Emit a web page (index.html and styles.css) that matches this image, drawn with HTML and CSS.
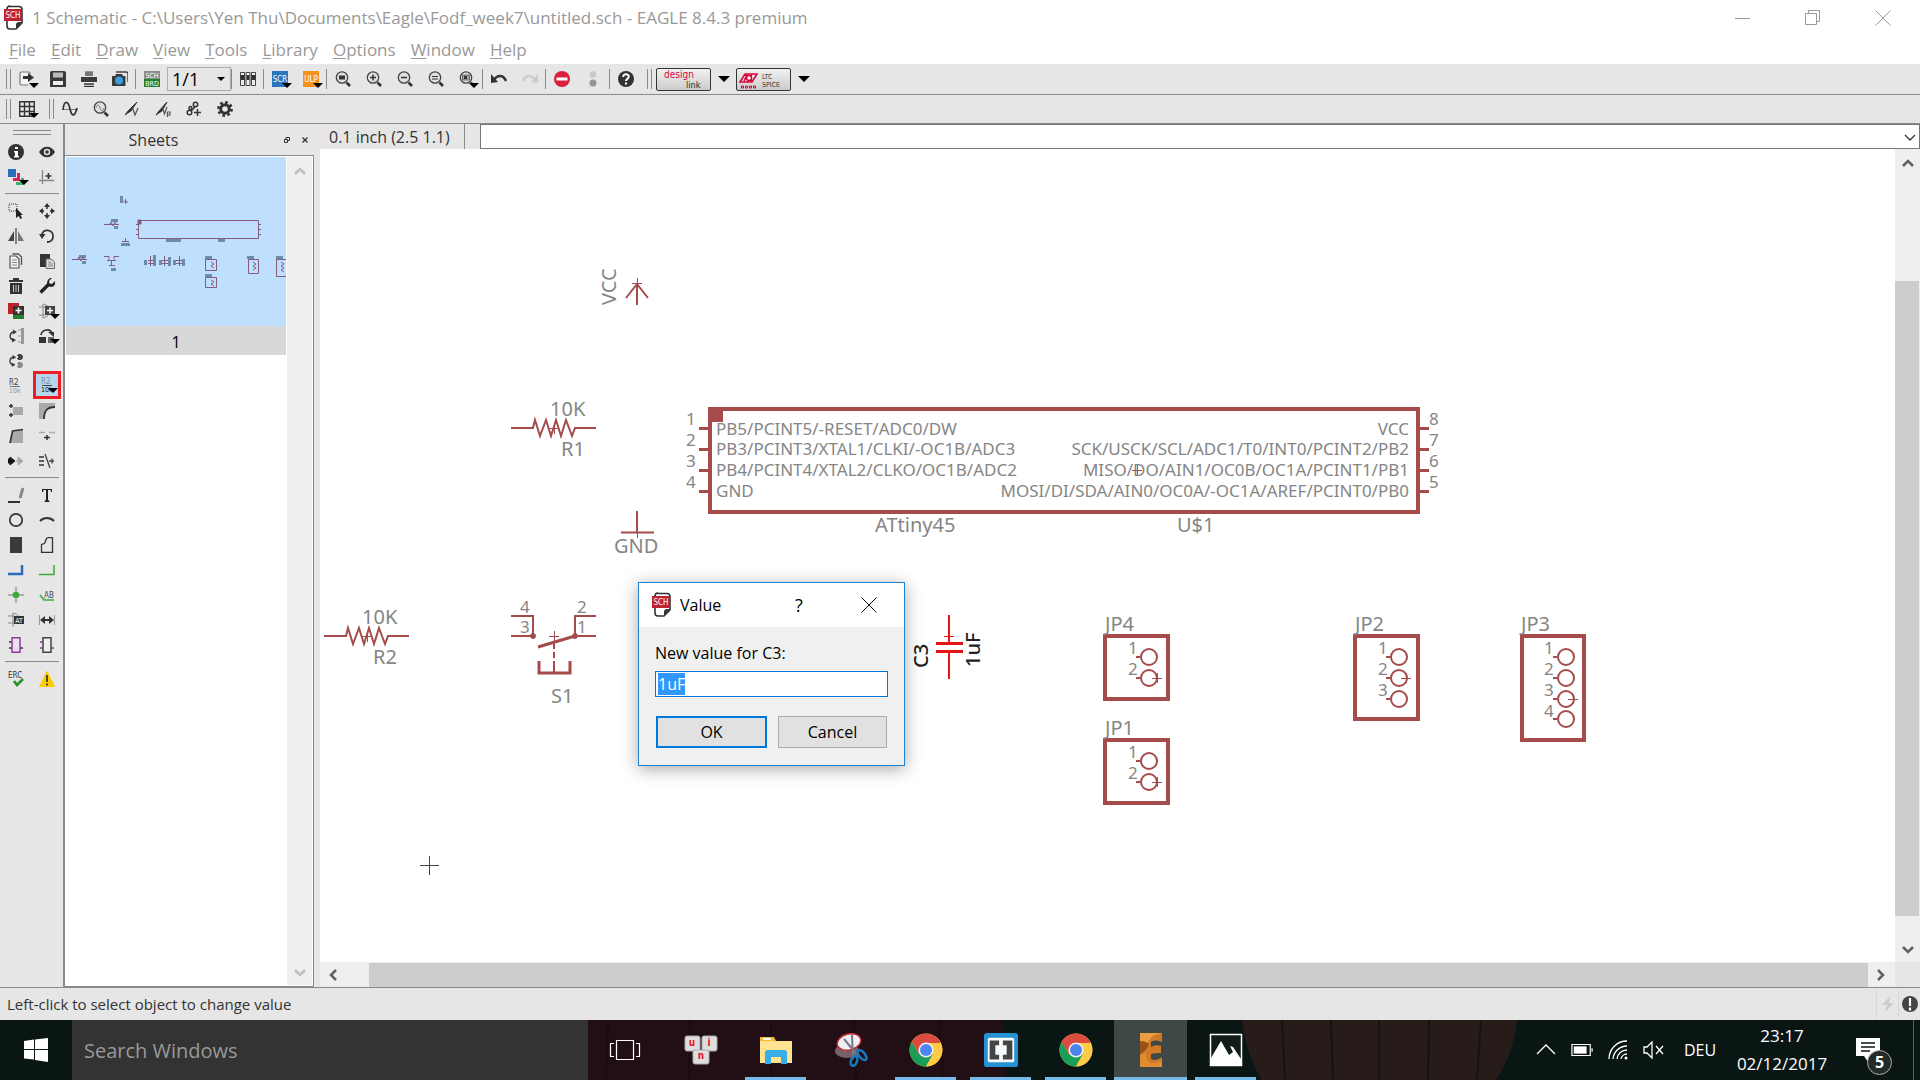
FILE: index.html
```html
<!DOCTYPE html>
<html lang="en">
<head>
<meta charset="utf-8">
<title>1 Schematic - EAGLE 8.4.3 premium</title>
<link rel="stylesheet" href="styles.css">
</head>
<body>
<svg class="defs" aria-hidden="true">
  <symbol id="sch-file" viewBox="0 0 20 26">
    <path d="M5 1.500h10a3 3 0 0 1 3 3V18l-6 6H6a3 3 0 0 1-3-3V4a3 3 0 0 1 3-3z" fill="#fff" stroke="#333" stroke-width="1.600"/>
    <path d="M18 17l-6 7v-4a3 3 0 0 1 3-3z" fill="#333"/>
    <rect x="0" y="4" width="18" height="12" fill="#bf2330"/>
    <text x="9" y="13" font-size="8" text-anchor="middle" class="tiny" fill="#fff">SCH</text>
  </symbol>
  <symbol id="lens" viewBox="0 0 16 16">
    <circle cx="7" cy="6.500" r="5.700" fill="#e0e0e0" stroke="#444" stroke-width="1.300"/>
    <path d="M11.500 11.500l3.500 3.500" stroke="#333" stroke-width="2.600"/>
  </symbol>
  <symbol id="chrome" viewBox="0 0 34 34">
    <circle cx="17" cy="17" r="16.500" fill="#fbc94a"/>
    <path d="M17 17L2.700 8.800A16.500 16.500 0 0 1 31.300 9H17z" fill="#db4b3f"/>
    <path d="M2.700 8.800A16.500 16.500 0 0 0 17 33.500l7-12.500-14 0z" fill="#1a9d57"/>
    <path d="M31.300 9H17l7 12-7 12.500A16.500 16.500 0 0 0 31.300 9z" fill="#fdcb45"/>
    <path d="M2.700 8.800L10 21l4-11h17.300A16.500 16.500 0 0 0 2.700 8.800z" fill="#db4b3f"/>
    <circle cx="17" cy="17" r="7.600" fill="#f1f1f1"/>
    <circle cx="17" cy="17" r="6" fill="#4a86ee"/>
  </symbol>
  <symbol id="rotate" viewBox="0 0 16 16">
    <path d="M8 3C1 3 1 13 7 13" fill="none" stroke="#3b3b3b" stroke-width="1.800"/>
    <path d="M6 0l5 3-5 3zM5 10l5 3-5 3z" fill="#3b3b3b"/>
  </symbol>
</svg>

<header class="titlebar">
  <svg class="app-icon" viewBox="0 0 20 26"><use href="#sch-file"/></svg>
  <h1>1 Schematic - C:\Users\Yen Thu\Documents\Eagle\Fodf_week7\untitled.sch - EAGLE 8.4.3 premium</h1>
  <div class="window-buttons">
    <button type="button" aria-label="Minimize"><svg viewBox="0 0 16 16"><path d="M0 8.500h15"/></svg></button>
    <button type="button" aria-label="Restore"><svg viewBox="0 0 16 16"><path d="M.5 3.500h11v11h-11zM3.500 3.500v-3h11v11h-3"/></svg></button>
    <button type="button" aria-label="Close"><svg viewBox="0 0 16 16"><path d="M.5 .5l15 15M15.500 .5l-15 15"/></svg></button>
  </div>
</header>

<nav class="menubar">
  <button type="button"><u>F</u>ile</button>
  <button type="button"><u>E</u>dit</button>
  <button type="button"><u>D</u>raw</button>
  <button type="button"><u>V</u>iew</button>
  <button type="button"><u>T</u>ools</button>
  <button type="button"><u>L</u>ibrary</button>
  <button type="button"><u>O</u>ptions</button>
  <button type="button"><u>W</u>indow</button>
  <button type="button"><u>H</u>elp</button>
</nav>

<div class="toolbar">
  <span class="grip"></span>
  <button type="button" class="tool drop" aria-label="Open"><svg viewBox="0 0 16 16"><path d="M11 3V2.500A1.500 1.500 0 0 0 9.500 1h-7A1.500 1.500 0 0 0 1 2.500v10A1.500 1.500 0 0 0 2.500 14h7" fill="#f4f4f4" stroke="#777" stroke-width="1.200"/><path d="M4 5h5V2l6 4.500L9 11V8H4z" fill="#333"/></svg></button>
  <button type="button" class="tool" aria-label="Save"><svg viewBox="0 0 16 16"><path d="M0 2a2 2 0 0 1 2-2h12a2 2 0 0 1 2 2v14H0z" fill="#3a3a3a"/><path d="M3 1.500h10v5H3z" fill="#bbb"/><path d="M3 10h10v4H3z" fill="#eee"/></svg></button>
  <button type="button" class="tool" aria-label="Print"><svg viewBox="0 0 16 16"><path d="M4 0h8v5H4z" fill="#999"/><path d="M4 2h8M4 4h8" stroke="#555"/><path d="M0 6h16v5H0z" fill="#3a3a3a"/><path d="M3 11h10v5H3z" fill="#f2f2f2"/><path d="M3 13h10M3 15.500h10" stroke="#333" stroke-width="1.500"/></svg></button>
  <button type="button" class="tool" aria-label="CAM processor"><svg viewBox="0 0 16 16"><path d="M4 1h10a2 2 0 0 1 2 2v8" fill="none" stroke="#444" stroke-width="1.500"/><path d="M0 5h3l1-2h6l1 2h2.500v10H0z" fill="#3a3a3a"/><circle cx="7" cy="9.500" r="4" fill="#36a0e0"/></svg></button>
  <button type="button" class="tool split" aria-label="Switch to board"><svg viewBox="0 0 16 16"><path d="M0 0h16v8H0z" fill="#8b8b8b"/><path d="M0 8h16v8H0z" fill="#25802b"/><text x="8" y="7" font-size="7" class="tiny" text-anchor="middle" fill="#fff">SCH</text><text x="8" y="15" font-size="7" class="tiny" text-anchor="middle" fill="#fff">BRD</text></svg></button>
  <label class="sheet-select"><select aria-label="Sheet"><option>1/1</option></select></label>
  <button type="button" class="tool split" aria-label="Library"><svg viewBox="0 0 16 16"><g fill="#eee" stroke="#444"><path d="M.5 1.500h4v13h-4zM6 1.500h4v13H6zM11.500 1.500h4v13h-4z"/></g><path d="M1 4h3v5H1zM6.500 4h3v5h-3zM12 4h3v5h-3z" fill="#333"/></svg></button>
  <button type="button" class="tool split drop" aria-label="Script"><svg viewBox="0 0 16 16"><path d="M0 0h16v16H0z" fill="#2a75bd"/><text x="8" y="11" font-size="8" class="tiny" text-anchor="middle" fill="#fff">SCR</text></svg></button>
  <button type="button" class="tool drop" aria-label="ULP"><svg viewBox="0 0 16 16"><path d="M0 0h16v16H0z" fill="#f5941d"/><text x="8" y="11" font-size="8" class="tiny" text-anchor="middle" fill="#fff">ULP</text></svg></button>
  <button type="button" class="tool split" aria-label="Zoom to fit"><svg viewBox="0 0 16 16"><use href="#lens"/><path d="M4 4.500h6v4H4z" fill="#333"/></svg></button>
  <button type="button" class="tool" aria-label="Zoom in"><svg viewBox="0 0 16 16"><use href="#lens"/><path d="M4 6.500h6M7 3.500v6" stroke="#333" stroke-width="1.500"/></svg></button>
  <button type="button" class="tool" aria-label="Zoom out"><svg viewBox="0 0 16 16"><use href="#lens"/><path d="M4 6.500h6" stroke="#333" stroke-width="1.500"/></svg></button>
  <button type="button" class="tool" aria-label="Redraw"><svg viewBox="0 0 16 16"><use href="#lens"/><path d="M4 5.500h6M4 8h6" stroke="#333"/></svg></button>
  <button type="button" class="tool drop" aria-label="Zoom select"><svg viewBox="0 0 16 16"><use href="#lens"/><path d="M3.500 4h7v5h-7z" fill="#aaa" stroke="#666"/><path d="M5 5h3v3H5z" fill="#333"/></svg></button>
  <button type="button" class="tool split" aria-label="Undo"><svg viewBox="0 0 16 16"><path d="M3 9c3-5 9-6 12 1" fill="none" stroke="#333" stroke-width="2.400"/><path d="M0 3v9l7-1z" fill="#333"/></svg></button>
  <button type="button" class="tool" aria-label="Redo" disabled><svg viewBox="0 0 16 16"><path d="M13 9C10 4 4 3 1 10" fill="none" stroke="#ccc" stroke-width="2.400"/><path d="M16 3v9l-7-1z" fill="#ccc"/></svg></button>
  <button type="button" class="tool split" aria-label="Stop"><svg viewBox="0 0 16 16"><circle cx="8" cy="8" r="8" fill="#dc1f3c"/><path d="M2.500 8h11" stroke="#fff" stroke-width="3"/></svg></button>
  <button type="button" class="tool" aria-label="Go" disabled><svg viewBox="0 0 16 16"><circle cx="8" cy="3.500" r="3.200" fill="#c8c8c8"/><circle cx="8" cy="12" r="3.500" fill="#959595"/></svg></button>
  <button type="button" class="tool split help" aria-label="Help"><svg viewBox="0 0 16 16"><circle cx="8" cy="8" r="8" fill="#333"/><path d="M5.200 6c0-4 6-3.500 5.500 0C10.500 8 8 7.800 8 10" fill="none" stroke="#fff" stroke-width="2"/><path d="M7 11.500h2v2H7z" fill="#fff"/></svg></button>
  <span class="grip"></span>
  <button type="button" class="vendor" aria-label="Design Link"><svg viewBox="0 0 53 21"><text x="7" y="9" font-size="10" fill="#d6083b" class="tiny">design</text><text x="29" y="19" font-size="9" fill="#222" class="tiny">link</text></svg></button>
  <button type="button" class="arrow" aria-label="Design Link options"></button>
  <button type="button" class="vendor" aria-label="LTC Spice"><svg viewBox="0 0 53 21"><path d="M3 13L8 5h12l-5 8zM10 6l-3 6M7 5l9 8M15 5l-4 8" fill="none" stroke="#d6083b" stroke-width="1.600"/><circle cx="12" cy="9" r="2.500" fill="#fff" stroke="#d6083b" stroke-width="1.500"/><path d="M4.500 17h2v2h-2zM8.500 17h2v2h-2zM12.500 17h2v2h-2zM16.500 17h2v2h-2z" fill="none" stroke="#d6083b"/><text x="25" y="10" font-size="7" fill="#333" class="tiny">LTC</text><text x="25" y="18" font-size="7" fill="#333" class="tiny">SPICE</text></svg></button>
  <button type="button" class="arrow" aria-label="LTC Spice options"></button>
</div>

<div class="toolbar second">
  <span class="grip"></span>
  <button type="button" class="tool drop" aria-label="Grid"><svg viewBox="0 0 16 16"><path d="M.75 .75h14.500v14.500H.75zM5.500 0v16M10.500 0v16M0 5.500h16M0 10.500h16" fill="none" stroke="#333" stroke-width="1.400"/></svg></button>
  <span class="grip"></span>
  <button type="button" class="tool" aria-label="Simulate"><svg viewBox="0 0 16 16"><path d="M0 8.500h16" stroke="#777"/><path d="M1 9C2-1 6-1 8 8s5 7 7-1" fill="none" stroke="#333" stroke-width="1.700"/></svg></button>
  <button type="button" class="tool" aria-label="Probe view"><svg viewBox="0 0 16 16"><use href="#lens"/><path d="M3 7c1-4 3-4 4 0s3 3 4 0" fill="none" stroke="#777"/></svg></button>
  <button type="button" class="tool" aria-label="Voltage probe"><svg viewBox="0 0 16 16"><path d="M1 14l3-4 9-9-6 9-4 2.500z" fill="#333" stroke="#333"/><path d="M8.500 7l2.500 7 3-7" fill="none" stroke="#555" stroke-width="1.300"/></svg></button>
  <button type="button" class="tool" aria-label="Phase probe"><svg viewBox="0 0 16 16"><path d="M1 14l3-4 8-9-5 9-4 2.500z" fill="#333" stroke="#333"/><path d="M7.500 6l2 7 2.500-7M12.500 16v-5h2.500v3h-2.500" fill="none" stroke="#555" stroke-width="1.200"/></svg></button>
  <button type="button" class="tool" aria-label="Add model"><svg viewBox="0 0 16 16"><g fill="none" stroke="#333" stroke-width="1.500"><circle cx="3.500" cy="11.500" r="2.300"/><circle cx="9.500" cy="3.500" r="2.200"/><circle cx="4.500" cy="7" r="1.500"/><path d="M5 10l4-4M11.500 8v7M8 11.500h7"/></g></svg></button>
  <button type="button" class="tool" aria-label="Settings"><svg viewBox="0 0 16 16"><circle cx="8" cy="8" r="4.300" fill="none" stroke="#333" stroke-width="3"/><circle cx="8" cy="8" r="6.600" fill="none" stroke="#333" stroke-width="2.600" stroke-dasharray="2.600 2.580"/></svg></button>
</div>

<main class="workspace">
  <aside class="palette" aria-label="Drawing tools">
    <span class="palette-grip"></span>
    <div class="palette-group">
      <button type="button" aria-label="Info"><svg viewBox="0 0 16 16"><circle cx="8" cy="8" r="8" fill="#333"/><path d="M7 3h3v2H7zM6 7h4v5h1v1.500H6V12h1V8.500H6z" fill="#fff"/></svg></button>
      <button type="button" aria-label="Show"><svg viewBox="0 0 16 16"><path d="M0 8c4-7 12-7 16 0-4 7-12 7-16 0z" fill="#333"/><circle cx="8" cy="8" r="2.500" fill="#333" stroke="#ddd" stroke-width="1.500"/></svg></button>
      <button type="button" class="drop" aria-label="Layers"><svg viewBox="0 0 16 16"><path d="M0 0h8v8H0z" fill="#2a6ebb"/><path d="M9 4h3v8H5V9h4z" fill="#dd1f55"/><path d="M13 9h3v7H8v-3h5z" fill="#39b36c"/></svg></button>
      <button type="button" aria-label="Mark"><svg viewBox="0 0 16 16"><path d="M3.500 1v14M0 11.500h15" stroke="#888" stroke-width="1.300"/><path d="M6.500 7h6M9.500 4v6" stroke="#333" stroke-width="1.600"/></svg></button>
    </div>
    <div class="palette-group">
      <button type="button" aria-label="Group"><svg viewBox="0 0 16 16"><path d="M1 1h8v7H1z" fill="none" stroke="#333" stroke-dasharray="1 1"/><path d="M8 5v10l2.500-2 2 3 1.500-1-1.500-3H15z" fill="#222"/></svg></button>
      <button type="button" aria-label="Move"><svg viewBox="0 0 16 16"><path d="M8 0l3 4H5zM8 16l3-4H5zM0 8l4-3v6zM16 8l-4-3v6z" fill="#333"/><path d="M8 3v3M8 10v3M3 8h2M11 8h2" stroke="#333" stroke-width="1.500"/></svg></button>
      <button type="button" aria-label="Mirror"><svg viewBox="0 0 16 16"><path d="M6 3v10H0z" fill="#444"/><path d="M10 3v10h6z" fill="#777"/><path d="M8 0v16" stroke="#555" stroke-width="1.400"/></svg></button>
      <button type="button" aria-label="Rotate"><svg viewBox="0 0 16 16"><path d="M3 7c0-7 12-6 11 2-.5 4-4 5-6 5" fill="none" stroke="#333" stroke-width="1.800"/><path d="M0 6h6.500L3 11z" fill="#333"/></svg></button>
      <button type="button" aria-label="Copy"><svg viewBox="0 0 16 16"><path d="M4.500 1h6l3 3v8" fill="none" stroke="#555" stroke-width="1.300"/><path d="M2 3h6l3 3v9H2z" fill="#f3f3f3" stroke="#555" stroke-width="1.200"/><path d="M4 7h5M4 9.500h5M4 12h5" stroke="#888"/></svg></button>
      <button type="button" aria-label="Paste"><svg viewBox="0 0 16 16"><path d="M1 1h10v13H1z" fill="#333"/><path d="M7 6h5l3.500 3v6.500H7z" fill="#ddd" stroke="#666"/><path d="M9 9h3M9 11h5M9 13h5" stroke="#888"/></svg></button>
      <button type="button" aria-label="Delete"><svg viewBox="0 0 16 16"><path d="M1 2h14v2H1zM5 0h6v2H5zM2 5h12v11H2z" fill="#333"/><path d="M5.500 7v7M8 7v7M10.500 7v7" stroke="#ccc"/></svg></button>
      <button type="button" aria-label="Change"><svg viewBox="0 0 16 16"><path d="M1.500 14.500L10 6" stroke="#222" stroke-width="3.400"/><path d="M13 0L10 3l.5 2.500 2.500.5 3-3c1 4-2 7-6 5.500C6.500 7 8-.5 13 0z" fill="#222"/></svg></button>
      <button type="button" aria-label="Add"><svg viewBox="0 0 16 16"><path d="M0 0h11v11H0z" fill="#bb2129"/><path d="M5 12h11v4H5z" fill="#25802b"/><path d="M5 3h11v9H5z" fill="#333"/><path d="M10.500 4.500v6M7.500 7.500h6" stroke="#fff" stroke-width="1.700"/></svg></button>
      <button type="button" class="drop" aria-label="Replace"><svg viewBox="0 0 16 16"><path d="M0 4h6M0 12h6M4 1v14C13 13 13 3 4 1z" fill="none" stroke="#888"/><path d="M6 3h10v9H6z" fill="#444"/><path d="M11 4.500v6M8 7.500h6" stroke="#fff" stroke-width="1.500"/></svg></button>
      <button type="button" aria-label="Pin swap"><svg viewBox="0 0 16 16"><use href="#rotate" width="13" height="16"/><path d="M13 0h3v16h-3z" fill="#999"/><path d="M10 2h4M10 8h4M10 14h4" stroke="#999"/></svg></button>
      <button type="button" class="drop" aria-label="Replace package"><svg viewBox="0 0 16 16"><path d="M2 7c1-6 10-7 11-1" fill="none" stroke="#333" stroke-width="1.700"/><path d="M9 4h6v5zM0 9h7v6H0z" fill="#333"/><path d="M9 9h6v6H9z" fill="#666"/></svg></button>
      <button type="button" aria-label="Gate swap"><svg viewBox="0 0 16 16"><use href="#rotate" width="12" height="16"/><path d="M10 1h2c4 0 4 6 0 6h-2zM9 2h2v1H9zM9 5h2v1H9z" fill="#444"/><path d="M10 9h2c4 0 4 6 0 6h-2zM9 10h2v1H9zM9 13h2v1H9z" fill="#888"/></svg></button>
      <span></span>
      <button type="button" aria-label="Name"><svg viewBox="0 0 16 16"><text x="1" y="7" font-size="8" class="tiny" fill="#444">R2</text><path d="M2 8.500h10" stroke="#777"/><text x="1" y="15" font-size="7" class="tiny" fill="#999">10k</text></svg></button>
      <button type="button" class="drop active" aria-label="Value"><svg viewBox="0 0 16 16"><text x="2" y="7" font-size="8" class="tiny" fill="#7b8f9d">R2</text><path d="M3 8.500h10" stroke="#444"/><text x="2" y="15" font-size="7" class="tiny" fill="#111">10k</text></svg></button>
      <button type="button" aria-label="Smash"><svg viewBox="0 0 16 16"><path d="M1 3h4M3 1v4M1 12h4M3 10v4" stroke="#333" stroke-width="1.500"/><path d="M5 4h10v8H5z" fill="#aaa"/></svg></button>
      <button type="button" aria-label="Miter"><svg viewBox="0 0 16 16"><path d="M0 0h16v4C8 4 5 8 5 16H0z" fill="#aaa"/><path d="M5 16C5 8 8 4 16 4" fill="none" stroke="#333" stroke-width="1.800"/></svg></button>
      <button type="button" aria-label="Split"><svg viewBox="0 0 16 16"><path d="M2 15L5 3l10-1v13z" fill="#aaa"/><path d="M2 15L4.500 3 15 1.500" fill="none" stroke="#333" stroke-width="1.700"/></svg></button>
      <button type="button" aria-label="Optimize"><svg viewBox="0 0 16 16"><path d="M0 4.500h6M10 4.500h6" stroke="#aaa" stroke-width="1.300"/><path d="M5 9.500h6M8 7v5" stroke="#333" stroke-width="1.500"/></svg></button>
      <button type="button" aria-label="Invoke"><svg viewBox="0 0 16 16"><path d="M0 6h2V4l5 4-5 4v-2H0z" fill="#111" stroke="#111"/><path d="M8 8h2V4l5 4-5 4V8" fill="#aaa" stroke="#aaa"/></svg></button>
      <button type="button" aria-label="Cut line"><svg viewBox="0 0 16 16"><path d="M0 4h5M0 8h5M0 12h5" stroke="#333" stroke-width="1.500"/><path d="M6 1l5 14M10 8h5M13 5.500v5" fill="none" stroke="#444" stroke-width="1.300"/></svg></button>
    </div>
    <div class="palette-group">
      <button type="button" aria-label="Line"><svg viewBox="0 0 16 16"><path d="M0 15h12" stroke="#111" stroke-width="1.700"/><path d="M15 1l-3 10" stroke="#888" stroke-width="3"/></svg></button>
      <button type="button" aria-label="Text"><svg viewBox="0 0 16 16"><path d="M3 2h10v3h-1l-.5-2H9v10l1.500 1v1h-5v-1L7 13V3H4.500L4 5H3z" fill="#222"/></svg></button>
      <button type="button" aria-label="Circle"><svg viewBox="0 0 16 16"><circle cx="8" cy="8" r="6.200" fill="none" stroke="#333" stroke-width="1.700"/></svg></button>
      <button type="button" aria-label="Arc"><svg viewBox="0 0 16 16"><path d="M1 9c4-4 10-4 14 0" fill="none" stroke="#333" stroke-width="2"/></svg></button>
      <button type="button" aria-label="Rectangle"><svg viewBox="0 0 16 16"><path d="M2 0h12v16H2z" fill="#3a3a3a"/></svg></button>
      <button type="button" aria-label="Polygon"><svg viewBox="0 0 16 16"><path d="M2.500 15.500v-8l3-1 2-5 2-1h4v15z" fill="none" stroke="#333" stroke-width="1.300"/></svg></button>
      <button type="button" aria-label="Bus"><svg viewBox="0 0 16 16"><path d="M0 12h14V3" fill="none" stroke="#2a6ebb" stroke-width="2.500"/></svg></button>
      <button type="button" aria-label="Net"><svg viewBox="0 0 16 16"><path d="M0 12.500h15V3" fill="none" stroke="#3cab3c" stroke-width="1.500"/></svg></button>
      <button type="button" aria-label="Junction"><svg viewBox="0 0 16 16"><path d="M0 8h16M8 0v16" stroke="#777"/><circle cx="8" cy="8" r="3.300" fill="#3cab3c"/></svg></button>
      <button type="button" aria-label="Label"><svg viewBox="0 0 16 16"><path d="M1 8l4 5h10" fill="none" stroke="#3cab3c" stroke-width="1.700"/><text x="5" y="11" font-size="8" class="tiny" fill="#444">AB</text></svg></button>
      <button type="button" aria-label="Attribute"><svg viewBox="0 0 16 16"><path d="M0 4h6M0 11h6M5 1v14M5 1c5 1 8 5 8 7" fill="none" stroke="#888"/><path d="M6 4h10v8H6z" fill="#333"/><text x="11" y="11" font-size="7" class="tiny" text-anchor="middle" fill="#fff">AT</text></svg></button>
      <button type="button" aria-label="Dimension"><svg viewBox="0 0 16 16"><path d="M.5 3v10M15.500 3v10" stroke="#999"/><path d="M4 8h8" stroke="#333" stroke-width="2"/><path d="M1 8l5-4v8zM15 8l-5-4v8z" fill="#333"/></svg></button>
      <button type="button" aria-label="Module"><svg viewBox="0 0 16 16"><path d="M1 5h3M1 11h3M12 11h3" stroke="#333" stroke-width="1.700"/><path d="M4 .7h8v14.600H4z" fill="#e8e0ec" stroke="#8b3f9b" stroke-width="1.500"/></svg></button>
      <button type="button" aria-label="Port"><svg viewBox="0 0 16 16"><path d="M1 5h3M1 11h3M12 11h3" stroke="#8b3f9b" stroke-width="1.700"/><path d="M4 .7h8v14.600H4z" fill="#eee" stroke="#444" stroke-width="1.500"/></svg></button>
    </div>
    <div class="palette-group">
      <button type="button" aria-label="ERC"><svg viewBox="0 0 16 16"><text x="0" y="7" font-size="8" class="tiny" fill="#333">ERC</text><path d="M6 10l3 4 6-6" fill="none" stroke="#2c8e35" stroke-width="2.700"/></svg></button>
      <button type="button" aria-label="Errors"><svg viewBox="0 0 16 16"><path d="M8 .5L15.500 15.500H.5z" fill="#fc0" stroke="#fc0"/><path d="M8 4v7M8 12.500v2" stroke="#333" stroke-width="1.700"/></svg></button>
    </div>
  </aside>

  <section class="sheets">
    <header>
      <h2>Sheets</h2>
      <button type="button" aria-label="Float"><svg viewBox="0 0 6 6"><path d="M.5 2.500h3v3h-3zM2 2V.5h3.500v3H4" fill="none" stroke="#333"/></svg></button>
      <button type="button" aria-label="Close"><svg viewBox="0 0 6 6"><path d="M.5 .5l5 5M5.500 .5l-5 5" stroke="#333" stroke-width="1.300"/></svg></button>
    </header>
    <div class="sheet-body">
      <div class="sheet-list">
        <figure>
          <svg viewBox="66 157 220 169">
            <g fill="#6b8cab"><path d="M120 196h3v7h-3zM111 219h7v3h-7zM114 226h4v3h-4zM121 243h9v3h-9zM166 239h15v3h-15zM218 239h7v3h-7zM79 255h7v3h-7zM82 261h4v3h-4zM111 268h5v3h-5zM144 260h3v5h-3zM153 255h3v11h-3zM159 260h3v5h-3zM168 257h3v9h-3zM173 260h3v5h-3zM182 259h3v7h-3zM205 256h7v3h-7zM205 274h7v3h-7zM247 256h7v3h-7zM276 256h7v3h-7z"/></g>
            <g fill="none" stroke="#865c7c"><path d="M138.500 220.500h120v18h-120zM104 224.500h15M109 225l2-3 2 4 2-4 2 3M125.500 199v5M123 202.500l2-2 3 2M125.500 238v4M122 241.500h7M72 259.500h15M77 260l2-3 2 4 2-4 2 3M104 256.500h5v3M119 256.500h-5v3M107 260.500h9M111.500 261v4M109 265.500h6M136 224.500h2M136 229.500h2M136 234.500h2M259 224.500h2M259 229.500h2M259 234.500h2M150.500 256v10M148 260.500h6M148 263.500h6M164.500 256v10M162 260.500h6M162 263.500h6M179.500 256v10M176 260.500h6M176 263.500h6M205.500 259.500h11v11h-11zM205.500 277.500h11v10h-11zM248.500 259.500h10v14h-10zM276.500 259.500h11v17h-11zM211 262l3 2-3 2 3 2M211 280l3 2-3 2 3 2M253 262l3 2-3 2 3 2-3 2M281 262l3 2-3 2 3 2-3 2 3 2"/><path d="M138 220h3v4h-3z" fill="#865c7c"/></g>
          </svg>
          <figcaption>1</figcaption>
        </figure>
      </div>
      <div class="vscroll faint">
        <svg viewBox="0 0 12 8"><path d="M1 7l5-5 5 5"/></svg>
        <svg viewBox="0 0 12 8"><path d="M1 1l5 5 5-5"/></svg>
      </div>
    </div>
  </section>

  <section class="editor">
    <div class="command-row">
      <output>0.1 inch (2.5 1.1)</output>
      <div class="command">
        <select aria-label="Command line"><option></option></select>
        <svg viewBox="0 0 12 8"><path d="M1 1l5 5 5-5" fill="none" stroke="#333" stroke-width="1.300"/></svg>
      </div>
    </div>
    <div class="canvas">
      <svg class="schematic" role="img" aria-label="Schematic">
        <defs>
          <g id="resistor"><path d="M511 428h22l2-8 5 16 6-16 5 16 5-16 5 16 5-16 6 16 3-8h21" stroke-width="2"/><path d="M549 428.500h10M554.500 424v10"/></g>
          <g id="pad"><circle r="8" stroke-width="2"/><path d="M-13 0h4" stroke-width="2"/></g>
          <path id="origin" d="M-5 .5h10M.5-5v10"/>
        </defs>
        <g transform="translate(-320 -149)">
          <g class="part">
            <path d="M637 283v22M626 298l11-14 11 14" stroke-width="2"/><use href="#origin" x="637" y="283"/>
            <use href="#resistor"/><use href="#resistor" x="-187" y="208"/>
            <path d="M637 511v22M621 532.500h33" stroke-width="2"/><path d="M637.500 530v8"/>
            <path d="M710 409h708v103H710z" stroke-width="4"/><path d="M708 407h15v15h-15z" fill="#a54b4b" stroke="none"/>
            <path d="M699 428.500h9M699 449.500h9M699 470.500h9M699 491.500h9M1420 428.500h9M1420 449.500h9M1420 470.500h9M1420 491.500h9" stroke-width="3"/>
            <path d="M511 616h22v20h-22M596 616h-21v20h21" stroke-width="2"/>
            <circle cx="533" cy="636" r="2.500" fill="#a54b4b"/><circle cx="575" cy="636" r="2.500" fill="#a54b4b"/>
            <path d="M575 636l-37 11M539 661v12h31v-12" stroke-width="3"/><path d="M554 643v6M554 652v6M554 661v12" stroke-width="2"/><use href="#origin" x="554" y="636"/>
            <g stroke-width="4"><path d="M1105 636h63v63h-63zM1105 740h63v63h-63zM1355 636h63v83h-63zM1522 636h62v104h-62z"/></g>
            <use href="#pad" x="1149" y="657"/><use href="#pad" x="1149" y="678"/><use href="#origin" x="1157" y="678"/>
            <use href="#pad" x="1149" y="761"/><use href="#pad" x="1149" y="782"/><use href="#origin" x="1157" y="782"/>
            <use href="#pad" x="1399" y="657"/><use href="#pad" x="1399" y="678"/><use href="#pad" x="1399" y="699"/><use href="#origin" x="1406" y="678"/>
            <use href="#pad" x="1566" y="657"/><use href="#pad" x="1566" y="678"/><use href="#pad" x="1566" y="699"/><use href="#pad" x="1566" y="719"/><use href="#origin" x="1573" y="699"/>
          </g>
          <g class="part selected"><path d="M949 615v28M949 652v27" stroke-width="2"/><path d="M936 643.500h27M936 651.500h27" stroke-width="3"/><use href="#origin" x="949" y="636"/></g>
          <g class="name">
            <text transform="translate(616 305) rotate(-90)">VCC</text>
            <text x="550" y="416">10K</text><text x="561" y="456">R1</text>
            <text x="362" y="624">10K</text><text x="373" y="664">R2</text>
            <text x="614" y="553">GND</text><text x="875" y="532">ATtiny45</text><text x="1177" y="532">U$1</text>
            <text x="551" y="703">S1</text>
            <text x="1105" y="631">JP4</text><text x="1105" y="735">JP1</text><text x="1355" y="631">JP2</text><text x="1521" y="631">JP3</text>
            <text class="picked" transform="translate(928 668) rotate(-90)">C3</text><text class="picked" transform="translate(980 667) rotate(-90)">1uF</text>
          </g>
          <g class="pin">
            <text x="686" y="425">1</text><text x="686" y="446">2</text><text x="686" y="467">3</text><text x="686" y="488">4</text>
            <text x="1429" y="425">8</text><text x="1429" y="446">7</text><text x="1429" y="467">6</text><text x="1429" y="488">5</text>
            <text x="520" y="613">4</text><text x="520" y="633">3</text><text x="577" y="613">2</text><text x="577" y="633">1</text>
            <text x="1128" y="654">1</text><text x="1128" y="675">2</text><text x="1128" y="758">1</text><text x="1128" y="779">2</text>
            <text x="1378" y="654">1</text><text x="1378" y="675">2</text><text x="1378" y="696">3</text>
            <text x="1544" y="654">1</text><text x="1544" y="675">2</text><text x="1544" y="696">3</text><text x="1544" y="717">4</text>
          </g>
          <g class="signal">
            <text x="716" y="435">PB5/PCINT5/-RESET/ADC0/DW</text><text x="716" y="455">PB3/PCINT3/XTAL1/CLKI/-OC1B/ADC3</text><text x="716" y="476">PB4/PCINT4/XTAL2/CLKO/OC1B/ADC2</text><text x="716" y="497">GND</text>
            <g text-anchor="end"><text x="1409" y="435">VCC</text><text x="1409" y="455">SCK/USCK/SCL/ADC1/T0/INT0/PCINT2/PB2</text><text x="1409" y="476">MISO/DO/AIN1/OC0B/OC1A/PCINT1/PB1</text><text x="1409" y="497">MOSI/DI/SDA/AIN0/OC0A/-OC1A/AREF/PCINT0/PB0</text></g>
          </g>
          <g class="part"><use href="#origin" x="1137" y="470"/></g>
          <path d="M420 865.500h19M429.500 856v19" stroke="#444"/>
        </g>
      </svg>

      <form class="dialog" role="dialog" aria-labelledby="dialog-title">
        <header>
          <svg class="app-icon" viewBox="0 0 20 26"><use href="#sch-file"/></svg>
          <h2 id="dialog-title">Value</h2>
          <button type="button" aria-label="Help">?</button>
          <button type="button" aria-label="Close"><svg viewBox="0 0 16 16"><path d="M.5 .5l15 15M15.500 .5l-15 15" stroke="#111"/></svg></button>
        </header>
        <div class="dialog-body">
          <label for="value">New value for C3:</label>
          <input id="value" type="text" value="1uF" spellcheck="false">
          <div class="dialog-actions">
            <button type="button" class="default">OK</button>
            <button type="button">Cancel</button>
          </div>
        </div>
      </form>
    </div>
    <div class="vscroll">
      <svg viewBox="0 0 12 8"><path d="M1 7l5-5 5 5"/></svg>
      <div class="track"><div class="thumb"></div></div>
      <svg viewBox="0 0 12 8"><path d="M1 1l5 5 5-5"/></svg>
    </div>
    <div class="hscroll">
      <svg viewBox="0 0 8 12"><path d="M7 1L2 6l5 5"/></svg>
      <div class="track"><div class="thumb"></div></div>
      <svg viewBox="0 0 8 12"><path d="M1 1l5 5-5 5"/></svg>
    </div>
  </section>
</main>

<footer class="status">
  <p>Left-click to select object to change value</p>
  <span class="status-cell"><svg viewBox="0 0 16 16"><path d="M10 0L2 9h5l-2 7 9-9H9z" fill="#ccc"/></svg></span>
  <span class="status-cell"><svg viewBox="0 0 16 16"><circle cx="8" cy="8" r="8" fill="#444"/><path d="M8 2v8M8 11.500v3" stroke="#fff" stroke-width="2.200"/></svg></span>
</footer>

<div class="taskbar">
  <svg class="wallpaper" aria-hidden="true">
    <path d="M588 0h415l3 60H588z" fill="#220f16"/>
    <path d="M608 0l-2 60M690 0l-1 60M771 0v60M854 0l2 60M939 0l4 60" stroke="#170c10" stroke-width="2"/>
    <path d="M1242 0q4 35 20 60h234q17-25 21-60z" fill="#271c1a"/>
    <path d="M1282 0l3 60M1331 0l2 60M1379 0v60M1429 0l-1 60M1481 0l-4 60" stroke="#171313" stroke-width="2"/>
    <path d="M1913.500 0v60" stroke="#5a6261"/>
  </svg>
  <button type="button" class="start" aria-label="Start"><svg viewBox="0 0 24 24"><path d="M0 3l10-1.500V11H0zM11 1.400L24 0v11H11zM0 12h10v9.500L0 20.500zM11 12h13v12l-13-2z" fill="#fff"/></svg></button>
  <input class="search" type="search" placeholder="Search Windows" aria-label="Search Windows">
  <div class="apps">
    <button type="button" aria-label="Task view"><svg viewBox="0 0 34 34"><path d="M7.500 7.500h17v19h-17zM5 10.500H1.500v13H5M27 10.500h3.500v13H27" fill="none" stroke="#fff" stroke-width="1.200"/></svg></button>
    <button type="button" aria-label="Unikey"><svg viewBox="0 0 34 34"><g fill="#dedede" stroke="#aaa"><rect x="1" y="3" width="15" height="15" rx="2"/><rect x="18" y="3" width="15" height="15" rx="2"/><rect x="9" y="17" width="16" height="14" rx="2"/></g><g fill="#e12" font-size="10" class="tiny bold" text-anchor="middle"><text x="8" y="13">u</text><text x="25" y="13">i</text><text x="17" y="26">n</text></g></svg></button>
    <button type="button" class="running" aria-label="File Explorer"><svg viewBox="0 0 34 34"><path d="M1 4h14l2 4h-16z" fill="#f5b82e"/><path d="M4 5h8v2H4z" fill="#fff"/><path d="M1 8h32v22H1z" fill="#ffe391"/><path d="M6 31V20a3 3 0 0 1 3-3h16a3 3 0 0 1 3 3v11h-6v-7H12v7z" fill="#37afe5"/></svg></button>
    <button type="button" aria-label="Snipping Tool"><svg viewBox="0 0 34 34"><ellipse cx="13" cy="18" rx="12" ry="7" fill="#75606a"/><ellipse cx="15" cy="9" rx="12" ry="8" fill="#eef0f7" stroke="#c42a31" stroke-width="1.500" transform="rotate(-15 15 9)"/><path d="M10 6l15 18M18 2l1 24" stroke="#778" stroke-width="2"/><g fill="none" stroke="#1878bb" stroke-width="2.500"><ellipse cx="20" cy="28" rx="3" ry="5" transform="rotate(20 20 28)"/><ellipse cx="28" cy="22" rx="3" ry="6" transform="rotate(-40 28 22)"/></g></svg></button>
    <button type="button" class="running" aria-label="Chrome"><svg viewBox="0 0 34 34"><use href="#chrome"/></svg></button>
    <button type="button" class="running" aria-label="Brackets"><svg viewBox="0 0 36 36"><rect width="36" height="36" rx="3" fill="#2492d5"/><rect x="4" y="5" width="28" height="26" rx="2" fill="#f6fafc"/><path d="M6 8h10v5h-4v10h4v5H6zM30 8H20v5h4v10h-4v5h10z" fill="#444"/></svg></button>
    <button type="button" class="running" aria-label="Chrome profile"><svg viewBox="0 0 34 34"><use href="#chrome"/></svg></button>
    <button type="button" class="running current" aria-label="EAGLE"><svg viewBox="0 0 34 34"><path d="M6 0h22v9c-4-2-8-2-11 0v5c4-2 6-2 10-1v7c-4 0-7 0-10 1v5c3 2 7 1 11-2v10H6z" fill="#d07a28"/><path d="M6 0h22c-7 1-11 3-13 8l-3 8c-1 3-3 4-6 5z" fill="#ee9c40"/><path d="M6 8c4 0 7 1 9 3-2 5-4 8-9 10z" fill="#9a5216"/><path d="M12 19c-1 5 1 9 5 11 4 1 8 0 11-3v7H6V23z" fill="#e28c32"/></svg></button>
    <button type="button" class="running" aria-label="Photos"><svg viewBox="0 0 34 34"><path d="M1.500 1.500h31v31h-31z" fill="#111b1a" stroke="#fff" stroke-width="1.500"/><path d="M2 25L12 8l8 14 4-3-3-6 3 1 8 12v6H2z" fill="#fff"/></svg></button>
  </div>
  <div class="tray">
    <button type="button" aria-label="Show hidden icons"><svg viewBox="0 0 22 20"><path d="M2 14l9-9 9 9"/></svg></button>
    <button type="button" aria-label="Battery"><svg viewBox="0 0 24 20"><path d="M1 4h20v12H1zM23 8v4"/><path d="M3 6h14v8H3z" fill="#fff" stroke="none"/></svg></button>
    <button type="button" aria-label="Network"><svg viewBox="0 0 20 20"><path d="M1 19A18 18 0 0 1 19 1M5 19A14 14 0 0 1 19 6M9 19a10 10 0 0 1 10-9M13 19a6 6 0 0 1 6-5"/><circle cx="18" cy="18" r="1.500" fill="#fff" stroke="none"/></svg></button>
    <button type="button" aria-label="Volume muted"><svg viewBox="0 0 22 20"><path d="M1 7h3l5-5v16l-5-5H1zM13 6l7 8M20 6l-7 8"/></svg></button>
    <button type="button" class="language">DEU</button>
    <button type="button" class="clock"><time>23:17</time><time>02/12/2017</time></button>
    <button type="button" class="notices" aria-label="5 notifications"><svg viewBox="0 0 24 24"><path d="M0 0h24v18H15l-3 6-4-6H0z" fill="#fff" stroke="none"/><path d="M5 5h14M5 9h14M5 13h9" stroke="#0a1614"/></svg><span class="badge">5</span></button>
  </div>
</div>
<script src="script.js"></script>
</body>
</html>
```
FILE: styles.css
```css
* { box-sizing: border-box; }

:root {
  --ui: "Open Sans", "Noto Sans", sans-serif;
  --chrome: #e6e6e6;
  --line: #8a8a8c;
  --accent: #0078d7;
}

body {
  margin: 0;
  min-height: 100vh;
  display: flex;
  flex-direction: column;
  font: 16px/20px var(--ui);
  color: #333;
  background: #fff;
}

h1, h2, p, figure { margin: 0; font: inherit; }

button {
  margin: 0;
  padding: 0;
  border: 0;
  background: none;
  color: inherit;
  font: inherit;
  display: flex;
  align-items: center;
  justify-content: center;
}

.defs { position: absolute; width: 0; height: 0; }
.tiny { font-family: "DejaVu Sans Condensed", "Liberation Sans", sans-serif; }
.bold { font-weight: bold; }

/* Title and menu */
.titlebar {
  display: flex;
  align-items: center;
  height: 36px;
  padding: 0 2px 0 4px;
  gap: 8px;
  color: #999;
}
.titlebar h1 { flex: 1; font-size: 17px; white-space: nowrap; }
.app-icon { width: 20px; height: 26px; }
.window-buttons { display: flex; }
.window-buttons button { width: 70px; height: 32px; }
.window-buttons svg { width: 16px; height: 16px; fill: none; stroke: #999; }

.menubar { display: flex; height: 28px; gap: 15px; padding-left: 9px; color: #999; font-size: 17px; }
.menubar u { text-underline-offset: 2px; }

/* Toolbars */
.toolbar {
  display: flex;
  align-items: center;
  height: 31px;
  padding-left: 6px;
  background: var(--chrome);
  border-bottom: 1px solid var(--line);
}
.toolbar.second { height: 29px; }
.grip { width: 5px; height: 20px; border: solid var(--line); border-width: 0 1px; }
.tool { position: relative; width: 31px; height: 20px; }
.tool svg, .palette button svg { width: 16px; height: 16px; }
.split { width: 32px; border-left: 1px solid var(--line); }
.help { margin-left: 1px; }
.help + .grip { margin: 0 4px 0 6px; }
.second .drop { margin-right: 7px; }
.drop::after {
  content: "";
  position: absolute;
  left: 50%;
  top: 50%;
  margin: 4px 0 0 2px;
  border: solid transparent;
  border-width: 5px 5px 0;
  border-top-color: #000;
}
.sheet-select { position: relative; display: flex; width: 64px; height: 24px; border: 1px solid #adadad; }
.sheet-select select {
  width: 100%;
  padding: 0 4px;
  border: 0;
  appearance: none;
  background: none;
  color: #000;
  font: 18px/20px var(--ui);
}
.sheet-select::after {
  content: "";
  position: absolute;
  right: 5px;
  top: 9px;
  border: solid transparent;
  border-width: 4px 4px 0;
  border-top-color: #000;
}
.vendor {
  width: 55px;
  height: 23px;
  border: 1px solid #333;
  border-radius: 2px;
  background: linear-gradient(#f0f0f0, #ccc);
}
.vendor svg { width: 53px; height: 21px; }
.arrow { width: 25px; height: 20px; }
.arrow::after { content: ""; border: solid transparent; border-width: 6px 6px 0; border-top-color: #000; }

/* Work area */
.workspace { flex: 1; display: flex; min-height: 0; border-bottom: 1px solid var(--line); }

.palette { flex: none; width: 65px; background: var(--chrome); border-right: 2px solid #88888f; }
.palette-grip { display: block; height: 5px; margin: 6px 12px 4px 13px; border: solid var(--line); border-width: 1px 0; }
.palette-group { display: grid; grid-template-columns: 31px 31px; grid-auto-rows: 25px; padding-bottom: 4px; }
.palette-group + .palette-group { padding-top: 5px; background: linear-gradient(var(--line), var(--line)) 5px 0 / 54px 1px no-repeat; }
.palette-group button { position: relative; }
.palette .drop::after { margin: 3px 0 0 3px; }
.palette .active { margin: -2px 1px -1px 2px; border: 3px solid #ee1c25; background: #b7d5ec; }
.palette .active::after { margin-left: 1px; }

.sheets { flex: none; width: 255px; display: flex; flex-direction: column; background: var(--chrome); padding-right: 6px; }
.sheets header { display: flex; align-items: center; height: 31px; }
.sheets h2 { flex: 1; padding-right: 36px; text-align: center; }
.sheets header button { width: 18px; height: 18px; }
.sheets header svg { width: 6px; height: 6px; }
.sheet-body { flex: 1; display: flex; gap: 1px; border: 1px solid #88888f; border-width: 1px 1px 1px 0; padding: 1px; background: #fff; }
.sheet-list { flex: 1; }
.sheet-list svg { display: block; width: 100%; background: #bfdfff; }
figcaption { height: 29px; text-align: center; line-height: 33px; background: #d8d8d8; color: #000; }

.vscroll { display: flex; flex-direction: column; align-items: center; justify-content: space-between; width: 25px; padding: 10px 0 8px; background: #efefef; }
.vscroll > svg { width: 12px; height: 8px; }
.hscroll > svg { width: 8px; height: 12px; }
.vscroll path, .hscroll path { fill: none; stroke: #606060; stroke-width: 2.500; }
.faint path { stroke: #bfbfbf; }
.thumb { background: #cdcdcd; }

.editor { flex: 1; min-width: 0; display: grid; grid-template: 25px 1fr 25px / 1fr 25px; background: var(--chrome); }
.command-row { grid-column: 1 / -1; display: flex; }
.command-row output { width: 145px; padding: 3px 0 0 9px; border-right: 1px solid var(--line); white-space: nowrap; }
.command { position: relative; flex: 1; margin-left: 15px; border: 1px solid #777; background: #fff; }
.command select { width: 100%; height: 100%; border: 0; appearance: none; background: none; }
.command svg { position: absolute; right: 3px; top: 9px; width: 12px; height: 8px; }
.canvas { position: relative; background: #fff; min-width: 0; overflow: hidden; }
.schematic { display: block; width: 100%; height: 100%; }
.editor .track { flex: 1; display: flex; }
.editor .vscroll .track { width: 100%; flex-direction: column; padding: 114px 1px 30px 0; }
.editor .vscroll .thumb { flex: 1; }
.hscroll { display: flex; align-items: center; padding: 0 10px 0 9px; background: #efefef; }
.hscroll .track { height: 24px; padding: 0 9px 0 32px; }
.hscroll .thumb { flex: 1; }

.part { fill: none; stroke: #a54b4b; }
.part.selected { stroke: #e51515; }
.name, .pin, .signal { fill: #858585; font-family: "Noto Sans", "Open Sans", sans-serif; }
.name { font-size: 20px; }
.pin { font-size: 17px; }
.signal { font-size: 17px; }
.name .picked { fill: #222; font-weight: 500; }

/* Value dialog */
.dialog {
  position: absolute;
  left: 318px;
  top: 433px;
  width: 267px;
  background: #f0f0f0;
  border: 1px solid #1b83d6;
  box-shadow: 0 3px 16px rgba(0, 0, 0, .35);
  color: #000;
}
.dialog header { display: flex; align-items: center; height: 44px; padding-left: 13px; background: #fff; }
.dialog h2 { flex: 1; padding-left: 8px; }
.dialog header button { width: 70px; font-size: 18px; }
.dialog header button svg { width: 16px; height: 16px; }
.dialog-body { display: flex; flex-direction: column; padding: 16px 16px 17px; }
.dialog input {
  height: 26px;
  margin: 8px 0 19px;
  padding: 0 2px;
  border: 1px solid var(--accent);
  outline: 0;
  background: #fff;
  font: 16px/20px var(--ui);
}
.dialog input::selection { background: #3297fd; color: #fff; }
.dialog-actions { display: flex; gap: 11px; padding: 0 1px; }
.dialog-actions button { flex: 1; height: 32px; border: 1px solid #adadad; background: #e1e1e1; }
.dialog-actions .default { border: 2px solid var(--accent); }

/* Status line */
.status { display: flex; align-items: center; height: 32px; background: var(--chrome); padding-left: 7px; }
.status p { flex: 1; font-size: 15px; }
.status-cell { display: flex; align-items: center; justify-content: center; width: 22px; height: 28px; border-left: 1px solid #d5d5d5; }
.status-cell svg { width: 16px; height: 16px; }

/* Windows taskbar */
.taskbar { position: relative; display: flex; height: 60px; background: #0a1614; color: #fff; }
.wallpaper { position: absolute; width: 100%; height: 100%; }
.taskbar > :not(.wallpaper) { position: relative; }
.start { width: 72px; }
.start svg { width: 24px; height: 24px; }
.search { width: 516px; padding: 2px 0 0 12px; border: 0; background: #333; color: #fff; font: 20px/24px var(--ui); }
.search::placeholder { color: #999; opacity: 1; }
.apps { display: flex; flex: 1; }
.apps button { width: 61px; margin: 0 7px; border: solid transparent; border-width: 3px 0; }
.apps svg { width: 34px; height: 34px; }
.apps .running { border-bottom-color: #76b9ed; }
.apps .current { width: 73px; margin: 0 1px; border-top: 0; padding-top: 3px; background: #3f4846; }
.tray { display: flex; align-items: center; padding-right: 20px; }
.taskbar > .wallpaper { position: absolute; }
.tray > button { height: 60px; width: 36px; }
.tray svg { height: 20px; width: 22px; fill: none; stroke: #fff; stroke-width: 1.300; }
.tray .language { width: 56px; }
.tray .clock { width: 108px; flex-direction: column; font-size: 17px; line-height: 28px; }
.tray .notices { position: relative; width: 64px; }
.tray .notices svg { width: 24px; height: 24px; }
.badge {
  position: absolute;
  left: 31px;
  top: 30px;
  width: 25px;
  height: 25px;
  border: 1px solid #aaa;
  border-radius: 50%;
  background: #222b2a;
  font-weight: bold;
  line-height: 23px;
}
```
FILE: script.js
```js
const field = document.getElementById("value");
field.focus();
field.select();
```
